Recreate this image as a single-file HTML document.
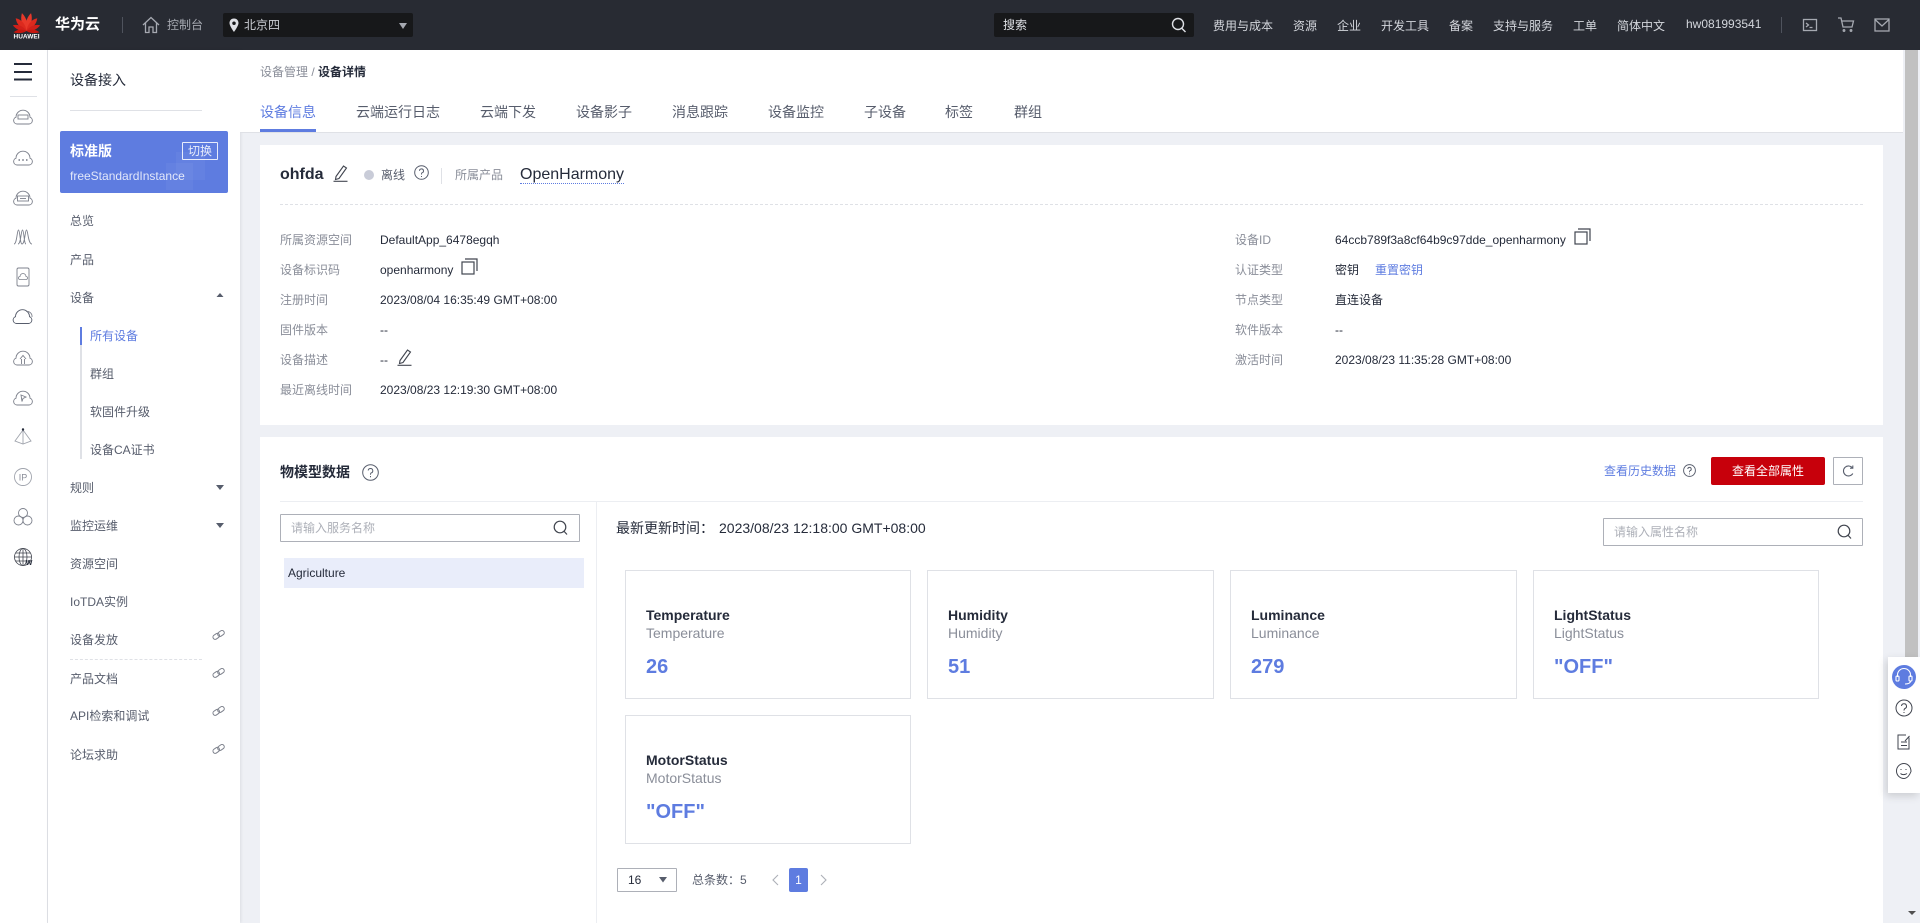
<!DOCTYPE html>
<html lang="zh">
<head>
<meta charset="utf-8">
<title>设备详情</title>
<style>
html,body{margin:0;padding:0;width:1920px;height:923px;overflow:hidden;background:#eef0f5}
body{position:relative;font-family:"Liberation Sans","Noto Sans CJK SC",sans-serif;font-size:12px;color:#252b3a}
.b{position:absolute;box-sizing:border-box}
.t{position:absolute;white-space:nowrap;line-height:20px;height:20px}
.l{color:#8a8e99}
.m{color:#575d6c}
.h{color:#d3d6dc}
.f14{font-size:14px}
.p{color:#5e7ce0}
svg{position:absolute;overflow:visible}
.card{position:absolute;box-sizing:border-box;width:286px;height:129px;border:1px solid #dfe1e6;background:#fff}
.card b{position:absolute;left:20px;top:34px;font-size:14px;line-height:20px;color:#252b3a;white-space:nowrap}
.card span{position:absolute;left:20px;top:52px;font-size:14px;line-height:20px;color:#8a8e99;white-space:nowrap}
.card i{position:absolute;left:20px;top:82px;font-size:20px;line-height:28px;font-weight:bold;font-style:normal;color:#5e7ce0;white-space:nowrap}
</style>
</head>
<body>
<!-- header -->
<div class="b" style="left:0;top:0;width:1920px;height:50px;background:#282b33"></div>
<svg style="left:0;top:0" width="60" height="50" viewBox="0 0 60 50">
<g transform="translate(26.5,31) scale(.92)" fill="#dc2a1e">
<path transform="rotate(-10)" d="M0 0C-4.5-6-4.5-14-1.5-20C3-14 3-6 0 0Z" fill="#e8392a"/>
<path transform="rotate(10) scale(-1,1)" d="M0 0C-4.5-6-4.5-14-1.5-20C3-14 3-6 0 0Z" fill="#e8392a"/>
<path transform="rotate(-34)" d="M0 0C-4.5-6-4.5-13-2-18C3-13 3-6 0 0Z"/>
<path transform="rotate(34) scale(-1,1)" d="M0 0C-4.5-6-4.5-13-2-18C3-13 3-6 0 0Z"/>
<path transform="rotate(-60)" d="M0 0C-4-5-4-11-2-16C2.500-11 2.500-5 0 0Z" fill="#d0201a"/>
<path transform="rotate(60) scale(-1,1)" d="M0 0C-4-5-4-11-2-16C2.500-11 2.500-5 0 0Z" fill="#d0201a"/>
<path transform="rotate(-88)" d="M0 0C-3-4-3-10-2-14C2-10 2-4 0 0Z" fill="#c7170f"/>
<path transform="rotate(88) scale(-1,1)" d="M0 0C-3-4-3-10-2-14C2-10 2-4 0 0Z" fill="#c7170f"/>
</g>
<text x="26.500" y="38.500" text-anchor="middle" font-size="6.500" font-weight="bold" fill="#fff" font-family="Liberation Sans">HUAWEI</text>
</svg>
<div class="t" style="left:55px;top:15px;font-size:15px;font-weight:bold;color:#fff">华为云</div>
<div class="b" style="left:122px;top:17px;width:1px;height:16px;background:#4f535d"></div>
<svg style="left:142px;top:16px" width="18" height="18" viewBox="0 0 18 18" fill="none" stroke="#a6a9b1" stroke-width="1.300"><path d="M1 9L9 1.500L17 9M3.500 7V16.500H7V11H11V16.500H14.500V7"/></svg>
<div class="t" style="left:167px;top:15px;color:#a6a9b1">控制台</div>
<div class="b" style="left:223px;top:13px;width:190px;height:24px;background:#17181a;border-radius:2px"></div>
<svg style="left:228px;top:18px" width="12" height="15" viewBox="0 0 12 15"><path d="M6 0.500C2.800 0.500 1.500 3 1.500 5C1.500 8 6 14 6 14C6 14 10.500 8 10.500 5C10.500 3 9.200 0.500 6 0.500ZM6 3.500A1.700 1.700 0 1 1 6 7A1.700 1.700 0 0 1 6 3.500Z" fill="#dfe1e6" fill-rule="evenodd"/></svg>
<div class="t" style="left:244px;top:15px;color:#c9ccd2">北京四</div>
<svg style="left:399px;top:23px" width="8" height="6" viewBox="0 0 8 6"><path d="M0 0H8L4 6Z" fill="#a6a9b1"/></svg>
<div class="b" style="left:994px;top:13px;width:200px;height:24px;background:#17181a;border-radius:2px"></div>
<div class="t" style="left:1003px;top:15px;color:#dfe1e6">搜索</div>
<svg style="left:1171px;top:17px" width="16" height="16" viewBox="0 0 16 16" fill="none" stroke="#dfe1e6" stroke-width="1.400"><circle cx="7" cy="7" r="5.500"/><path d="M10.500 11L14.500 15"/></svg>
<div class="t h" style="left:1213px;top:16px">费用与成本</div>
<div class="t h" style="left:1293px;top:16px">资源</div>
<div class="t h" style="left:1337px;top:16px">企业</div>
<div class="t h" style="left:1381px;top:16px">开发工具</div>
<div class="t h" style="left:1449px;top:16px">备案</div>
<div class="t h" style="left:1493px;top:16px">支持与服务</div>
<div class="t h" style="left:1573px;top:16px">工单</div>
<div class="t h" style="left:1617px;top:16px">简体中文</div>
<div class="t h" style="left:1686px;top:14px">hw081993541</div>
<div class="b" style="left:1781px;top:17px;width:1px;height:16px;background:#4f535d"></div>
<svg style="left:1800px;top:16px" width="100" height="20" viewBox="0 0 100 20" fill="none" stroke="#a6a9b1" stroke-width="1.300">
<rect x="3.500" y="3.500" width="13" height="11"/><path d="M6 7L8.500 9L6 11M9.500 11.500H12.500"/>
<path d="M38 2H41L43 11H52L53.500 5H41.500"/><circle cx="44" cy="14.500" r=".8"/><circle cx="51" cy="14.500" r=".8"/>
<rect x="75" y="3" width="14" height="12"/><path d="M75 3.500L82 10L89 3.500"/>
</svg>
<!-- icon column -->
<div class="b" style="left:0;top:50px;width:48px;height:873px;background:#fff;border-right:1px solid #dfe1e6"></div>
<svg style="left:0;top:0" width="47" height="600" viewBox="0 0 47 600" fill="none" stroke="#7d818c" stroke-width=".9">
<rect x="14" y="63" width="18" height="2" fill="#252b3a" stroke="none"/><rect x="14" y="71" width="18" height="2" fill="#252b3a" stroke="none"/><rect x="14" y="78.500" width="18" height="2" fill="#252b3a" stroke="none"/>
<rect x="10" y="96" width="27" height="1" fill="#dfe1e6" stroke="none"/>
<g transform="translate(23,117)"><path d="M-6 7h12a3.500 3.500 0 0 0 1-6.800a7 7 0 0 0-14 0a3.500 3.500 0 0 0 1 6.800z"/><rect x="-5" y="-2" width="10" height="4"/></g>
<g transform="translate(23,158)"><path d="M-6 7h12a3.500 3.500 0 0 0 1-6.800a7 7 0 0 0-14 0a3.500 3.500 0 0 0 1 6.800z"/><path d="M-4.500 2h1.500M-.8 2H.8M3 2h1.500" stroke="#575d6c" stroke-width="1.200"/></g>
<g transform="translate(23,198)"><path d="M-6 7h12a3.500 3.500 0 0 0 1-6.800a7 7 0 0 0-14 0a3.500 3.500 0 0 0 1 6.800z"/><rect x="-5.500" y="-2" width="11" height="5"/><path d="M-3 .500h6"/></g>
<g transform="translate(23,237)"><path d="M-9 7C-6 7-6-7-4.500-7C-3-7-3 7-1 7M-5 7C-2 7-2-7-.5-7C1-7 1 7 3 7M-1 7C2 7 2-7 3.500-7C5-7 5 7 9 7"/></g>
<g transform="translate(23,277)"><rect x="-6" y="-9" width="12" height="18" rx="1.500"/><path d="M-3 2.500h6a1.500 1.500 0 0 0 0-3a3 3 0 0 0-6 0a1.500 1.500 0 0 0 0 3z" stroke-width=".8"/></g>
<g transform="translate(23,317)"><path d="M-6.500 6.500h12a3.500 3.500 0 0 0 1-6.800a7 7 0 0 0-14 0a3.500 3.500 0 0 0 1 6.800z" stroke="#575d6c"/><path d="M3-5.500a5 5 0 0 1 6 5.500" /></g>
<g transform="translate(23,358)"><path d="M-6 7h12a3.500 3.500 0 0 0 1-6.800a7 7 0 0 0-14 0a3.500 3.500 0 0 0 1 6.800z"/><path d="M-3 1L0-2.500L3 1M-1.500 1V6M1.500 1V6"/></g>
<g transform="translate(23,398)"><path d="M-6 7h12a3.500 3.500 0 0 0 1-6.800a7 7 0 0 0-14 0a3.500 3.500 0 0 0 1 6.800z"/><path d="M-2-3L3-1L0 .5L-1 3.500Z"/></g>
<g transform="translate(23,437)" stroke="#a0a4ad"><path d="M0-7L-8 4L0 7L8 4ZM0-7V7"/><circle cx="0" cy="-7.500" r="1.200" fill="#252b3a" stroke="none"/></g>
<g transform="translate(23,477)" stroke="#a0a4ad"><circle cx="0" cy="0" r="8.500"/><text x="0" y="3.500" text-anchor="middle" font-size="9" fill="#8a8e99" stroke="none" font-family="Liberation Sans">IP</text></g>
<g transform="translate(23,517)"><circle cx="0" cy="-4" r="4.500"/><circle cx="-4.500" cy="3.500" r="4.500"/><circle cx="4.500" cy="3.500" r="4.500"/></g>
<g transform="translate(23,557)" stroke="#41454f" stroke-width=".8"><circle cx="0" cy="0" r="8.500"/><ellipse cx="0" cy="0" rx="4" ry="8.500"/><path d="M-8.500 0h17M-7.500-4h15M-7.500 4h15M0-8.500V8.500"/><text x="6" y="8" text-anchor="middle" font-size="7" font-weight="bold" fill="#252b3a" stroke="none" font-family="Liberation Sans">W</text></g>
</svg>
<!-- nav sidebar -->
<div class="b" style="left:48px;top:50px;width:192px;height:873px;background:#fff;box-shadow:1px 0 3px rgba(0,0,0,.08)"></div>
<div class="t f14" style="left:70px;top:70px;color:#252b3a">设备接入</div>
<div class="b" style="left:70px;top:110px;width:132px;height:1px;background:#dfe1e6"></div>
<div class="b" style="left:60px;top:131px;width:168px;height:62px;background:#5e7ce0;border-radius:2px;overflow:hidden">
<div class="b" style="left:106px;top:32px;width:27px;height:27px;background:rgba(255,255,255,.045)"></div>
<div class="b" style="left:116px;top:21px;width:29px;height:28px;background:rgba(255,255,255,.045)"></div>
</div>
<div class="t f14" style="left:70px;top:141px;color:#fff;font-weight:bold">标准版</div>
<div class="b" style="left:182px;top:142px;width:36px;height:18px;border:1px solid rgba(255,255,255,.85);border-radius:1px;color:rgba(255,255,255,.85);text-align:center;line-height:16px">切换</div>
<div class="t" style="left:70px;top:166px;color:rgba(255,255,255,.82)">freeStandardInstance</div>
<div class="t m" style="left:70px;top:211px">总览</div>
<div class="t m" style="left:70px;top:250px">产品</div>
<div class="t m" style="left:70px;top:288px">设备</div>
<div class="b" style="left:80px;top:327px;width:2px;height:132px;background:#dfe1e6"></div>
<div class="b" style="left:80px;top:327px;width:2px;height:18px;background:#5e7ce0"></div>
<div class="t p" style="left:90px;top:326px">所有设备</div>
<div class="t m" style="left:90px;top:364px">群组</div>
<div class="t m" style="left:90px;top:402px">软固件升级</div>
<div class="t m" style="left:90px;top:440px">设备CA证书</div>
<div class="t m" style="left:70px;top:478px">规则</div>
<div class="t m" style="left:70px;top:516px">监控运维</div>
<div class="t m" style="left:70px;top:554px">资源空间</div>
<div class="t m" style="left:70px;top:592px">IoTDA实例</div>
<div class="t m" style="left:70px;top:630px">设备发放</div>
<div class="b" style="left:70px;top:659px;width:132px;height:0;border-top:1px dashed #dfe1e6"></div>
<div class="t m" style="left:70px;top:669px">产品文档</div>
<div class="t m" style="left:70px;top:706px">API检索和调试</div>
<div class="t m" style="left:70px;top:745px">论坛求助</div>
<svg style="left:212px;top:290px" width="20" height="480" viewBox="0 0 20 480" fill="none">
<path d="M4.500 7H11.500L8 3Z" fill="#575d6c"/>
<path d="M4 195H12L8 200Z" fill="#575d6c"/>
<path d="M4 233H12L8 238Z" fill="#575d6c"/>
<g stroke="#7d818c" stroke-width="1">
<g transform="translate(6,346)"><rect x="-5.500" y="-1.800" width="7" height="4.500" rx="2.200" transform="rotate(-35 -2 0)"/><rect x="-.5" y="-4.800" width="7" height="4.500" rx="2.200" transform="rotate(-35 3 -2.500)"/></g>
<g transform="translate(6,384)"><rect x="-5.500" y="-1.800" width="7" height="4.500" rx="2.200" transform="rotate(-35 -2 0)"/><rect x="-.5" y="-4.800" width="7" height="4.500" rx="2.200" transform="rotate(-35 3 -2.500)"/></g>
<g transform="translate(6,422)"><rect x="-5.500" y="-1.800" width="7" height="4.500" rx="2.200" transform="rotate(-35 -2 0)"/><rect x="-.5" y="-4.800" width="7" height="4.500" rx="2.200" transform="rotate(-35 3 -2.500)"/></g>
<g transform="translate(6,460)"><rect x="-5.500" y="-1.800" width="7" height="4.500" rx="2.200" transform="rotate(-35 -2 0)"/><rect x="-.5" y="-4.800" width="7" height="4.500" rx="2.200" transform="rotate(-35 3 -2.500)"/></g>
</g>
</svg>
<!-- top strip -->
<div class="b" style="left:240px;top:50px;width:1663px;height:83px;background:#fff;border-bottom:1px solid #dfe1e6"></div>
<div class="t" style="left:260px;top:62px;color:#8a8e99">设备管理 <span style="color:#8a8e99">/</span> <b style="color:#252b3a">设备详情</b></div>
<div class="t f14 p" style="left:260px;top:102px">设备信息</div>
<div class="b" style="left:260px;top:129px;width:56px;height:3px;background:#5e7ce0"></div>
<div class="t f14 m" style="left:356px;top:102px">云端运行日志</div>
<div class="t f14 m" style="left:480px;top:102px">云端下发</div>
<div class="t f14 m" style="left:576px;top:102px">设备影子</div>
<div class="t f14 m" style="left:672px;top:102px">消息跟踪</div>
<div class="t f14 m" style="left:768px;top:102px">设备监控</div>
<div class="t f14 m" style="left:864px;top:102px">子设备</div>
<div class="t f14 m" style="left:945px;top:102px">标签</div>
<div class="t f14 m" style="left:1014px;top:102px">群组</div>
<!-- device card -->
<div class="b" style="left:260px;top:145px;width:1623px;height:280px;background:#fff"></div>
<div class="t" style="left:280px;top:165px;font-size:16px;font-weight:bold;color:#252b3a">ohfda</div>
<svg style="left:333px;top:165px" width="15" height="17" viewBox="0 0 15 17" fill="none" stroke="#41454f" stroke-width="1.100"><path d="M3 11.500L10.500 1L13.500 3L6 13.500L2.500 14.500Z"/><path d="M0.500 16.300H14.500"/></svg>
<div class="b" style="left:364px;top:170px;width:10px;height:10px;border-radius:50%;background:#c9ccd8"></div>
<div class="t" style="left:381px;top:165px;color:#575d6c">离线</div>
<svg style="left:414px;top:165px" width="15" height="15" viewBox="0 0 15 15" fill="none" stroke="#575d6c" stroke-width="1"><circle cx="7.500" cy="7.500" r="6.800"/><path d="M5.500 5.800A2 2 0 1 1 8 7.800C7.500 8 7.500 8.500 7.500 9.500M7.500 11v1"/></svg>
<div class="b" style="left:441px;top:168px;width:1px;height:16px;background:#dfe1e6"></div>
<div class="t l" style="left:455px;top:165px">所属产品</div>
<div class="t" style="left:520px;top:165px;font-size:16px;color:#252b3a">OpenHarmony</div>
<div class="b" style="left:520px;top:183px;width:104px;height:0;border-top:1px dotted #5e7ce0"></div>
<div class="b" style="left:280px;top:204px;width:1583px;height:0;border-top:1px dashed #dfe1e6"></div>
<div class="t l" style="left:280px;top:230px">所属资源空间</div><div class="t" style="left:380px;top:230px">DefaultApp_6478egqh</div>
<div class="t l" style="left:280px;top:260px">设备标识码</div><div class="t" style="left:380px;top:260px">openharmony</div>
<svg style="left:461px;top:258px" width="17" height="17" viewBox="0 0 17 17" fill="none" stroke="#41454f" stroke-width="1.200"><rect x="1" y="4" width="12" height="12"/><path d="M4 1H16V13"/></svg>
<div class="t l" style="left:280px;top:290px">注册时间</div><div class="t" style="left:380px;top:290px">2023/08/04 16:35:49 GMT+08:00</div>
<div class="t l" style="left:280px;top:320px">固件版本</div><div class="t" style="left:380px;top:320px">--</div>
<div class="t l" style="left:280px;top:350px">设备描述</div><div class="t" style="left:380px;top:350px">--</div>
<svg style="left:397px;top:349px" width="15" height="17" viewBox="0 0 15 17" fill="none" stroke="#41454f" stroke-width="1.100"><path d="M3 11.500L10.500 1L13.500 3L6 13.500L2.500 14.500Z"/><path d="M0.500 16.300H14.500"/></svg>
<div class="t l" style="left:280px;top:380px">最近离线时间</div><div class="t" style="left:380px;top:380px">2023/08/23 12:19:30 GMT+08:00</div>
<div class="t l" style="left:1235px;top:230px">设备ID</div><div class="t" style="left:1335px;top:230px">64ccb789f3a8cf64b9c97dde_openharmony</div>
<svg style="left:1574px;top:228px" width="17" height="17" viewBox="0 0 17 17" fill="none" stroke="#41454f" stroke-width="1.200"><rect x="1" y="4" width="12" height="12"/><path d="M4 1H16V13"/></svg>
<div class="t l" style="left:1235px;top:260px">认证类型</div><div class="t" style="left:1335px;top:260px">密钥</div><div class="t p" style="left:1375px;top:260px">重置密钥</div>
<div class="t l" style="left:1235px;top:290px">节点类型</div><div class="t" style="left:1335px;top:290px">直连设备</div>
<div class="t l" style="left:1235px;top:320px">软件版本</div><div class="t" style="left:1335px;top:320px">--</div>
<div class="t l" style="left:1235px;top:350px">激活时间</div><div class="t" style="left:1335px;top:350px">2023/08/23 11:35:28 GMT+08:00</div>
<!-- data card -->
<div class="b" style="left:260px;top:437px;width:1623px;height:486px;background:#fff"></div>
<div class="t f14" style="left:280px;top:462px;font-weight:bold">物模型数据</div>
<svg style="left:362px;top:464px" width="17" height="17" viewBox="0 0 17 17" fill="none" stroke="#575d6c" stroke-width="1"><circle cx="8.500" cy="8.500" r="7.800"/><path d="M6.200 6.500A2.300 2.300 0 1 1 9 9C8.500 9.300 8.500 9.800 8.500 10.800M8.500 12v1.200"/></svg>
<div class="t p" style="left:1604px;top:461px">查看历史数据</div>
<svg style="left:1683px;top:464px" width="13" height="13" viewBox="0 0 15 15" fill="none" stroke="#575d6c" stroke-width="1.100"><circle cx="7.500" cy="7.500" r="6.800"/><path d="M5.500 5.800A2 2 0 1 1 8 7.800C7.500 8 7.500 8.500 7.500 9.500M7.500 11v1"/></svg>
<div class="b" style="left:1711px;top:457px;width:114px;height:28px;background:#c7000b;border-radius:2px;color:#fff;text-align:center;line-height:28px">查看全部属性</div>
<div class="b" style="left:1833px;top:457px;width:30px;height:28px;border:1px solid #adb0b8;border-radius:1px"></div>
<svg style="left:1842px;top:465px" width="12" height="12" viewBox="0 0 12 12" fill="none" stroke="#575d6c" stroke-width="1.100"><path d="M10.500 3A5 5 0 1 0 10.800 8.500"/><path d="M10.800 0.500V3.200H8"/></svg>
<div class="b" style="left:280px;top:501px;width:1583px;height:1px;background:#eceef2"></div>
<div class="b" style="left:596px;top:501px;width:1px;height:422px;background:#eceef2"></div>
<div class="b" style="left:280px;top:514px;width:300px;height:28px;border:1px solid #adb0b8;border-radius:1px"></div>
<div class="t" style="left:291px;top:518px;color:#adb0b8">请输入服务名称</div>
<svg style="left:553px;top:520px" width="16" height="16" viewBox="0 0 16 16" fill="none" stroke="#41454f" stroke-width="1.200"><circle cx="7" cy="7" r="5.800"/><path d="M10.800 11L14 14.500"/></svg>
<div class="b" style="left:284px;top:558px;width:300px;height:30px;background:#e9edfa"></div>
<div class="t" style="left:288px;top:563px">Agriculture</div>
<div class="t f14" style="left:616px;top:518px">最新更新时间：</div>
<div class="t f14" style="left:719px;top:518px">2023/08/23 12:18:00 GMT+08:00</div>
<div class="b" style="left:1603px;top:518px;width:260px;height:28px;border:1px solid #adb0b8;border-radius:1px"></div>
<div class="t" style="left:1614px;top:522px;color:#adb0b8">请输入属性名称</div>
<svg style="left:1837px;top:524px" width="16" height="16" viewBox="0 0 16 16" fill="none" stroke="#41454f" stroke-width="1.200"><circle cx="7" cy="7" r="5.800"/><path d="M10.800 11L14 14.500"/></svg>
<div class="card" style="left:625px;top:570px"><b>Temperature</b><span>Temperature</span><i>26</i></div>
<div class="card" style="left:927px;top:570px;width:287px"><b>Humidity</b><span>Humidity</span><i>51</i></div>
<div class="card" style="left:1230px;top:570px;width:287px"><b>Luminance</b><span>Luminance</span><i>279</i></div>
<div class="card" style="left:1533px;top:570px"><b>LightStatus</b><span>LightStatus</span><i>"OFF"</i></div>
<div class="card" style="left:625px;top:715px"><b>MotorStatus</b><span>MotorStatus</span><i>"OFF"</i></div>
<div class="b" style="left:617px;top:868px;width:60px;height:24px;border:1px solid #adb0b8;border-radius:1px"></div>
<div class="t" style="left:628px;top:870px">16</div>
<svg style="left:659px;top:877px" width="9" height="6" viewBox="0 0 9 6"><path d="M0 0H8L4 5.500Z" fill="#575d6c"/></svg>
<div class="t" style="left:692px;top:870px;color:#8a8e99"><span style="color:#575d6c">总条数：5</span></div>
<svg style="left:771px;top:874px" width="58" height="12" viewBox="0 0 58 12" fill="none" stroke="#adb0b8" stroke-width="1.100"><path d="M7 1L2 6L7 11"/><path d="M50 1L55 6L50 11"/></svg>
<div class="b" style="left:789px;top:868px;width:19px;height:24px;background:#5e7ce0;border-radius:2px;color:#fff;text-align:center;line-height:24px">1</div>
<!-- scrollbar & helper panel -->
<div class="b" style="left:1905px;top:50px;width:13px;height:607px;background:#c1c1c1"></div>
<svg style="left:1907px;top:910px" width="10" height="6" viewBox="0 0 10 6"><path d="M1 1H9L5 5Z" fill="#505050"/></svg>
<div class="b" style="left:1888px;top:657px;width:32px;height:136px;background:#fff;box-shadow:-2px 3px 8px rgba(0,0,0,.15)"></div>
<svg style="left:1888px;top:657px" width="32" height="136" viewBox="0 0 32 136" fill="none">
<circle cx="16" cy="20" r="12" fill="#5e7ce0"/>
<g stroke="#fff" stroke-width="1.100"><path d="M9.500 20V18A6.500 6.500 0 0 1 22.500 18V20"/><rect x="8" y="19" width="3" height="5" rx="1"/><rect x="21" y="19" width="3" height="5" rx="1"/><path d="M22.500 24C22.500 26 20 27 17 27"/></g>
<g stroke="#41454f" stroke-width="1"><circle cx="16" cy="51" r="8"/><path d="M13.500 49A2.500 2.500 0 1 1 17 51.500C16 52 16 52.500 16 53.500M16 55v1"/>
<path d="M21 80.500V92H10V78H18M13 85H19M13 88.500H19M17 84L21.500 79"/>
<path d="M16 106.500A7.500 7.500 0 1 0 16 121.500C19 121.500 21 119.500 23 114.500C23 110 20 106.500 16 106.500Z"/><path d="M13 112v1M18 112v1M12.500 116.500C14 118 17 118 19 116.500"/></g>
</svg>
</body>
</html>
